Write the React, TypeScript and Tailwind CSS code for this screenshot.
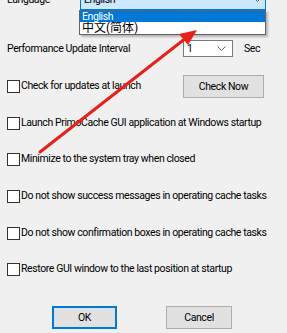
import React from "react";

// Plain Windows-style checkbox row
const CheckRow = ({ label, className = "" }: { label: string; className?: string }) => {
	return (
		<div className={`flex items-center h-[15px] pl-[7px] ${className}`}>
			<span className="w-[13px] h-[13px] border border-[#333333] bg-white shrink-0" />
			<span className="ml-[1px] leading-none whitespace-nowrap">{label}</span>
		</div>
	);
};

const Chevron = () => (
	<svg width="9" height="6" viewBox="0 0 9 6" className="shrink-0">
		<path d="M0.5 0.5 L4.5 4.5 L8.5 0.5" fill="none" stroke="#606060" strokeWidth="1" />
	</svg>
);

export default function App() {
	return (
		<div
			className="relative w-[287px] h-[333px] overflow-hidden bg-[#f0f0f0] text-[10.5px] tracking-[-0.4px] text-black"
			style={{ fontFamily: 'Roboto, "Noto Sans CJK SC", sans-serif' }}
		>
			<div className="flex flex-col">
				{/* Language */}
				<div className="flex items-center h-[21px] -mt-[11px]">
					<span className="pl-[7px] w-[80px]">Language</span>
					<div className="flex items-center justify-between w-[186px] h-[21px] border border-[#0078d7] bg-[#cce8ff] px-[3px]">
						<span>English</span>
						<Chevron />
					</div>
				</div>

				{/* Performance interval */}
				<div className="flex items-center h-[17px] mt-[30px]">
					<span className="pl-[7px] w-[183px] whitespace-nowrap">Performance Update Interval</span>
					<div className="flex items-center justify-between w-[50px] h-[17px] border border-[#7a7a7a] bg-white pl-[3px] pr-[6px]">
						<span>1</span>
						<Chevron />
					</div>
					<span className="ml-[11px]">Sec</span>
				</div>

				{/* Check for updates */}
				<div className="flex items-center justify-between h-[23px] mt-[18px] pr-[23px]">
					<CheckRow label="Check for updates at launch" />
					<button
						type="button"
						className="w-[81px] h-[23px] border border-[#adadad] bg-[#e1e1e1]"
					>
						Check Now
					</button>
				</div>

				<CheckRow label="Launch PrimoCache GUI application at Windows startup" className="mt-[18px]" />
				<CheckRow label="Minimize to the system tray when closed" className="mt-[21px]" />
				<CheckRow label="Do not show success messages in operating cache tasks" className="mt-[22px]" />
				<CheckRow label="Do not show confirmation boxes in operating cache tasks" className="mt-[22px]" />
				<CheckRow label="Restore GUI window to the last position at startup" className="mt-[21px]" />

				{/* Dialog buttons */}
				<div className="flex h-[23px] mt-[29px] pl-[52px] gap-[49px]">
					<button type="button" className="w-[65px] h-[23px] border-2 border-[#0078d7] bg-[#e1e1e1]">
						OK
					</button>
					<button type="button" className="w-[66px] h-[23px] border border-[#adadad] bg-[#e1e1e1]">
						Cancel
					</button>
				</div>
			</div>

			{/* Open language dropdown */}
			<div className="absolute left-[79px] top-[10px] w-[187px] border border-[#646464] bg-white shadow-[2px_2px_2px_rgba(0,0,0,0.25)]">
				<div className="h-[11px] bg-[#0078d7] text-white pl-[2px] leading-[11px] overflow-hidden">English</div>
				<div className="h-[12px] pl-[2px] leading-[12px] text-[12px] tracking-normal overflow-hidden">中文(简体)</div>
			</div>

			{/* Red annotation arrow */}
			<svg className="absolute left-0 top-0 pointer-events-none" width="287" height="333">
				<line x1="40" y1="152" x2="186" y2="38" stroke="#e8201c" strokeWidth="3" strokeLinecap="round" />
				<polygon points="197,30 188,45 179,34" fill="#e8201c" />
			</svg>
		</div>
	);
}
